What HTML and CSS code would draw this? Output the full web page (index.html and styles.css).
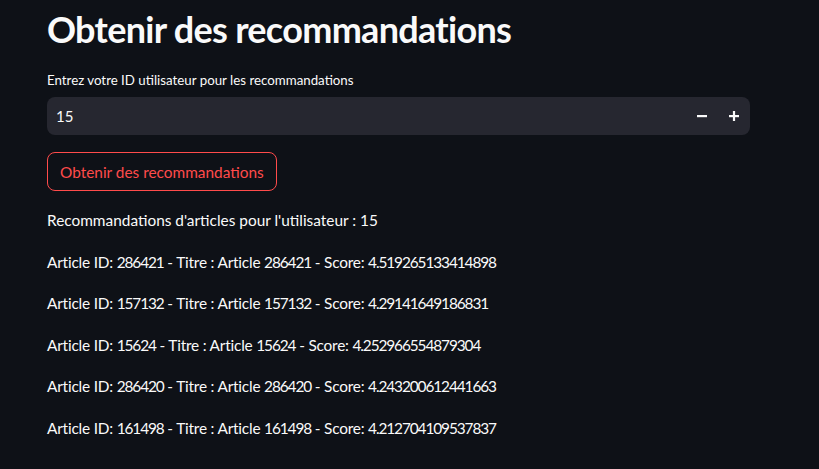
FILE: index.html
```html
<!DOCTYPE html>
<html lang="fr">
<head>
<meta charset="utf-8">
<link rel="stylesheet" href="styles.css">
</head>
<body>
<main class="main">
  <h1 class="title">Obtenir des recommandations</h1>
  <label class="label" for="uid">Entrez votre ID utilisateur pour les recommandations</label>
  <div class="number-input">
    <input id="uid" class="number-field" type="text" value="15">
    <button class="step" type="button" aria-label="moins">
      <svg width="10" height="10" viewBox="0 0 10 10"><rect x="0" y="4" width="10" height="2.2" fill="#fafafa"/></svg>
    </button>
    <button class="step" type="button" aria-label="plus">
      <svg width="10" height="10" viewBox="0 0 10 10"><rect x="0" y="4" width="10" height="2.2" fill="#fafafa"/><rect x="3.9" y="0" width="2.2" height="10" fill="#fafafa"/></svg>
    </button>
  </div>
  <button class="action" type="button">Obtenir des recommandations</button>
  <p class="text">Recommandations d'articles pour l'utilisateur : 15</p>
  <p class="text article">Article ID: <span class="num">286421</span> - Titre : Article <span class="num">286421</span> - Score: <span class="num">4.519265133414898</span></p>
  <p class="text article">Article ID: <span class="num">157132</span> - Titre : Article <span class="num">157132</span> - Score: <span class="num">4.29141649186831</span></p>
  <p class="text article">Article ID: <span class="num">15624</span> - Titre : Article <span class="num">15624</span> - Score: <span class="num">4.252966554879304</span></p>
  <p class="text article">Article ID: <span class="num">286420</span> - Titre : Article <span class="num">286420</span> - Score: <span class="num">4.243200612441663</span></p>
  <p class="text article">Article ID: <span class="num">161498</span> - Titre : Article <span class="num">161498</span> - Score: <span class="num">4.212704109537837</span></p>
</main>
</body>
</html>
```
FILE: styles.css
```css
html, body {
  margin: 0;
  background: #0e1117;
}
body {
  font-family: "Lato", "Noto Sans", sans-serif;
  color: #fafafa;
}
.main {
  width: 703px;
  padding: 0 0 0 47px;
  display: flex;
  flex-direction: column;
  align-items: flex-start;
}
.title {
  margin: 8px 0 0;
  font-size: 36px;
  font-weight: 700;
  letter-spacing: -0.7px;
  line-height: 42px;
}
.label {
  margin-top: 21px;
  font-size: 13.3px;
  line-height: 18px;
}
.number-input {
  margin-top: 8px;
  width: 703px;
  height: 38px;
  background: #262730;
  border-radius: 8px;
  display: flex;
  align-items: center;
}
.number-field {
  flex: 1;
  background: transparent;
  border: 0;
  outline: 0;
  color: #fafafa;
  font-family: inherit;
  font-size: 15px;
  padding: 0 0 0 9px;
}
.step {
  width: 32px;
  height: 38px;
  background: transparent;
  border: 0;
  padding: 0;
  display: flex;
  align-items: center;
  justify-content: center;
}
.action {
  margin-top: 17px;
  height: 39px;
  padding: 0 12px;
  background: #0e1117;
  border: 1px solid #ff4b4b;
  border-radius: 8px;
  color: #ff4b4b;
  font-family: inherit;
  font-size: 15.4px;
}
.text {
  margin: 0;
  font-size: 15.4px;
  line-height: 41.5px;
}
.article {
  letter-spacing: -0.2px;
}
.num {
  letter-spacing: -1.1px;
}
.action + .text {
  margin-top: 9px;
}
```
